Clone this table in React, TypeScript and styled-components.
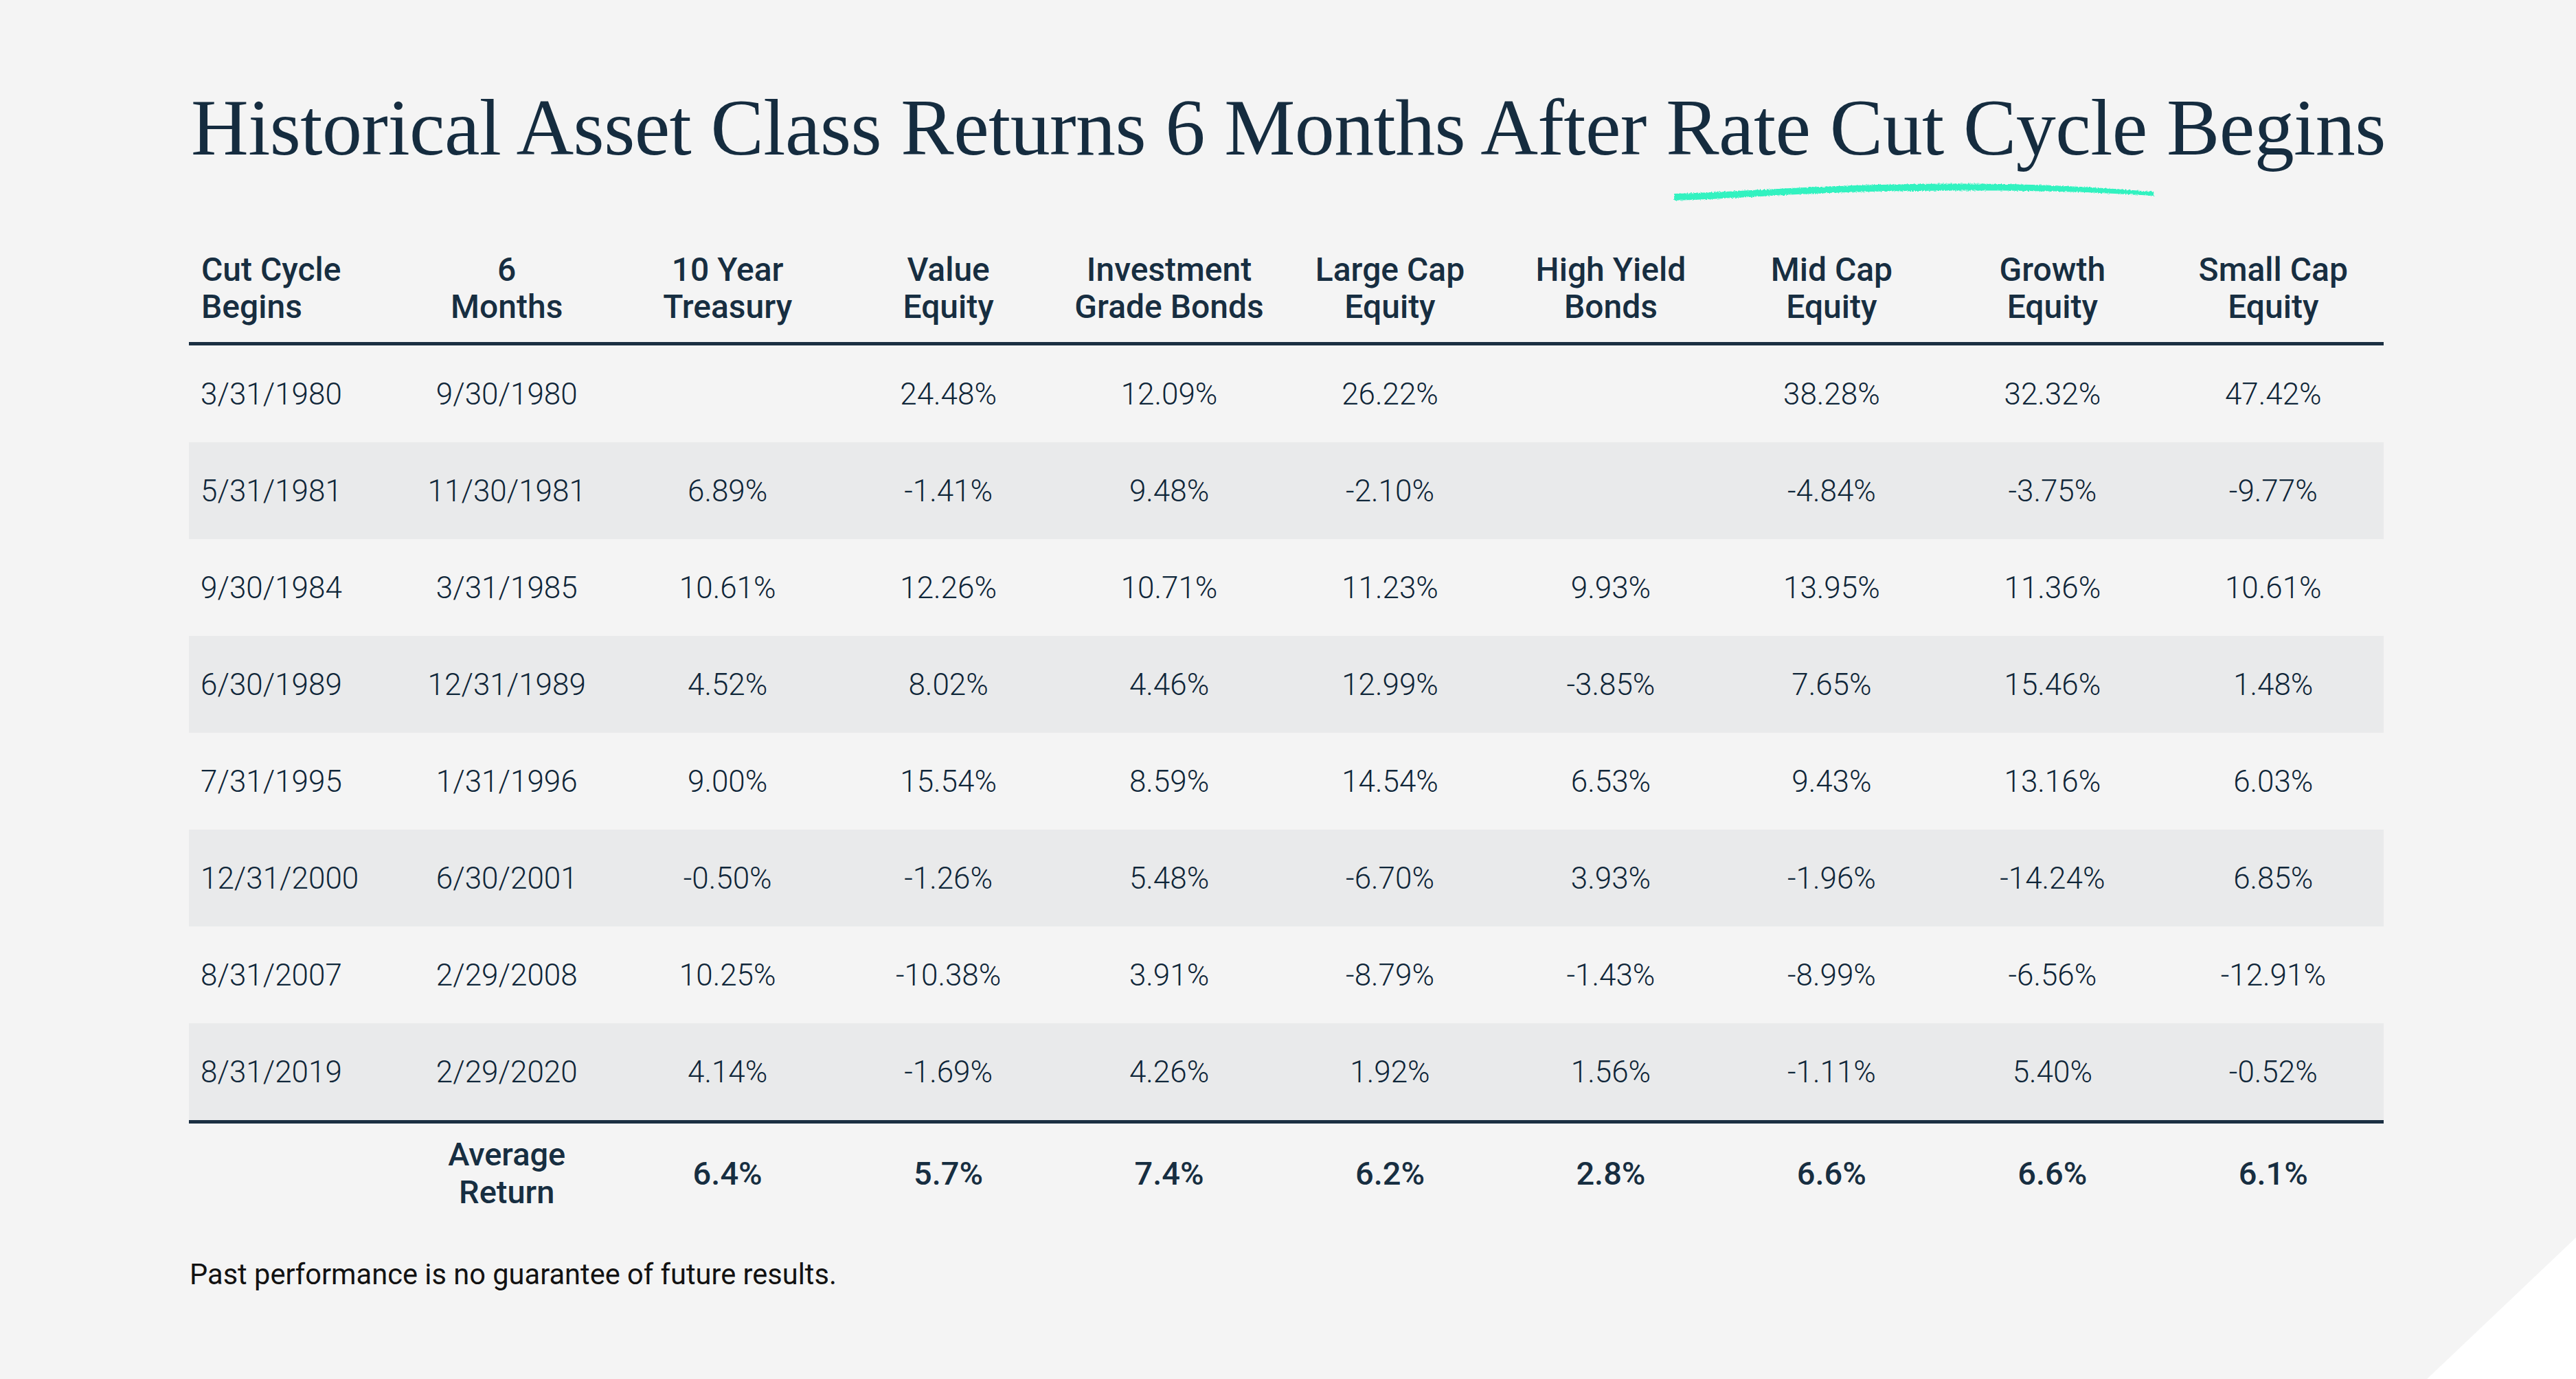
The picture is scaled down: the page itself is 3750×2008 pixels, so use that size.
import React from "react";
import styled, { createGlobalStyle } from "styled-components";

const GlobalStyle = createGlobalStyle`
  html, body {
    margin: 0;
    padding: 0;
    background: #ffffff;
  }
  * {
    box-sizing: border-box;
  }
`;

// pale grey sheet with the bottom-right corner cut off
const Page = styled.div`
  width: 3750px;
  height: 2008px;
  background: #f4f4f4;
  padding: 128px 280px 0 275px;
  clip-path: polygon(0 0, 100% 0, 100% 1802px, 3533px 100%, 0 100%);
  color: #172e41;
`;

const Title = styled.h1`
  margin: 0;
  font-family: "Liberation Serif", "DejaVu Serif", serif;
  font-weight: 400;
  font-size: 116px;
  line-height: 116px;
  letter-spacing: -0.6px;
  color: #152c3f;
  white-space: nowrap;
  padding-left: 3px;
`;

const Marked = styled.span`
  position: relative;
`;

const Stroke = styled.svg`
  position: absolute;
  left: 8px;
  top: calc(100% + 14px);
  width: calc(100% + 6px);
  height: 30px;
  overflow: visible;
`;

const Grid = styled.div`
  display: grid;
  grid-template-columns: 302px repeat(9, 1fr);
  align-items: center;
`;

const HeadRow = styled(Grid)`
  margin-top: 122px;
  padding-bottom: 24px;
  border-bottom: 5px solid #1b2f42;
  align-items: end;
`;

const HeadCell = styled.div<{ $first?: boolean }>`
  font-family: Roboto, "Liberation Sans", sans-serif;
  font-weight: 500;
  font-size: 48px;
  line-height: 54px;
  color: #172e41;
  text-align: ${(p) => (p.$first ? "left" : "center")};
  padding-left: ${(p) => (p.$first ? "18px" : "0")};
`;

const Row = styled(Grid)<{ $shaded: boolean }>`
  height: 141px;
  background: ${(p) => (p.$shaded ? "#e9eaeb" : "transparent")};
`;

const Cell = styled.div<{ $first?: boolean }>`
  font-family: Roboto, "Liberation Sans", sans-serif;
  font-weight: 300;
  font-size: 44px;
  line-height: 52px;
  color: #0f2639;
  text-align: ${(p) => (p.$first ? "left" : "center")};
  padding-left: ${(p) => (p.$first ? "17px" : "0")};
`;

const AvgRow = styled(Grid)`
  border-top: 5px solid #1b2f42;
  padding: 17px 0;
`;

const AvgCell = styled.div`
  font-family: Roboto, "Liberation Sans", sans-serif;
  font-weight: 500;
  font-size: 47px;
  line-height: 55px;
  color: #172e41;
  text-align: center;
`;

const Note = styled.p`
  margin: 52px 0 0 1px;
  font-family: Roboto, "Liberation Sans", sans-serif;
  font-size: 41.6px;
  line-height: 48px;
  color: #121212;
`;

const headers = [
  ["Cut Cycle", "Begins"],
  ["6", "Months"],
  ["10 Year", "Treasury"],
  ["Value", "Equity"],
  ["Investment", "Grade Bonds"],
  ["Large Cap", "Equity"],
  ["High Yield", "Bonds"],
  ["Mid Cap", "Equity"],
  ["Growth", "Equity"],
  ["Small Cap", "Equity"],
];

const rows = [
  ["3/31/1980", "9/30/1980", "", "24.48%", "12.09%", "26.22%", "", "38.28%", "32.32%", "47.42%"],
  ["5/31/1981", "11/30/1981", "6.89%", "-1.41%", "9.48%", "-2.10%", "", "-4.84%", "-3.75%", "-9.77%"],
  ["9/30/1984", "3/31/1985", "10.61%", "12.26%", "10.71%", "11.23%", "9.93%", "13.95%", "11.36%", "10.61%"],
  ["6/30/1989", "12/31/1989", "4.52%", "8.02%", "4.46%", "12.99%", "-3.85%", "7.65%", "15.46%", "1.48%"],
  ["7/31/1995", "1/31/1996", "9.00%", "15.54%", "8.59%", "14.54%", "6.53%", "9.43%", "13.16%", "6.03%"],
  ["12/31/2000", "6/30/2001", "-0.50%", "-1.26%", "5.48%", "-6.70%", "3.93%", "-1.96%", "-14.24%", "6.85%"],
  ["8/31/2007", "2/29/2008", "10.25%", "-10.38%", "3.91%", "-8.79%", "-1.43%", "-8.99%", "-6.56%", "-12.91%"],
  ["8/31/2019", "2/29/2020", "4.14%", "-1.69%", "4.26%", "1.92%", "1.56%", "-1.11%", "5.40%", "-0.52%"],
];

const averages = ["6.4%", "5.7%", "7.4%", "6.2%", "2.8%", "6.6%", "6.6%", "6.1%"];

function BrushStroke() {
  return (
    <Stroke viewBox="0 0 680 30" preserveAspectRatio="none">
      <defs>
        <filter id="rough" x="-5%" y="-80%" width="110%" height="260%">
          <feTurbulence type="fractalNoise" baseFrequency="0.5" numOctaves="2" seed="7" />
          <feDisplacementMap in="SourceGraphic" scale="4" />
        </filter>
      </defs>
      <path
        d="M4 18 C 100 15, 200 6, 340 4 S 560 6, 676 15 L 676 21 C 560 13, 440 13, 340 14 C 200 15, 100 25, 4 28 Z"
        fill="#31f2c0"
        filter="url(#rough)"
      />
    </Stroke>
  );
}

export default function App() {
  return (
    <>
      <GlobalStyle />
      <Page>
        <Title>
          Historical Asset Class Returns 6 Months After{" "}
          <Marked>
            Rate Cut Cycle
            <BrushStroke />
          </Marked>{" "}
          Begins
        </Title>

        <HeadRow>
          {headers.map((h, i) => (
            <HeadCell key={h.join()} $first={i === 0}>
              {h[0]}
              <br />
              {h[1]}
            </HeadCell>
          ))}
        </HeadRow>

        {rows.map((r, ri) => (
          <Row key={r[0]} $shaded={ri % 2 === 1}>
            {r.map((v, ci) => (
              <Cell key={ci} $first={ci === 0}>
                {v}
              </Cell>
            ))}
          </Row>
        ))}

        <AvgRow>
          <AvgCell />
          <AvgCell>
            Average
            <br />
            Return
          </AvgCell>
          {averages.map((a, i) => (
            <AvgCell key={i}>{a}</AvgCell>
          ))}
        </AvgRow>

        <Note>Past performance is no guarantee of future results.</Note>
      </Page>
    </>
  );
}
